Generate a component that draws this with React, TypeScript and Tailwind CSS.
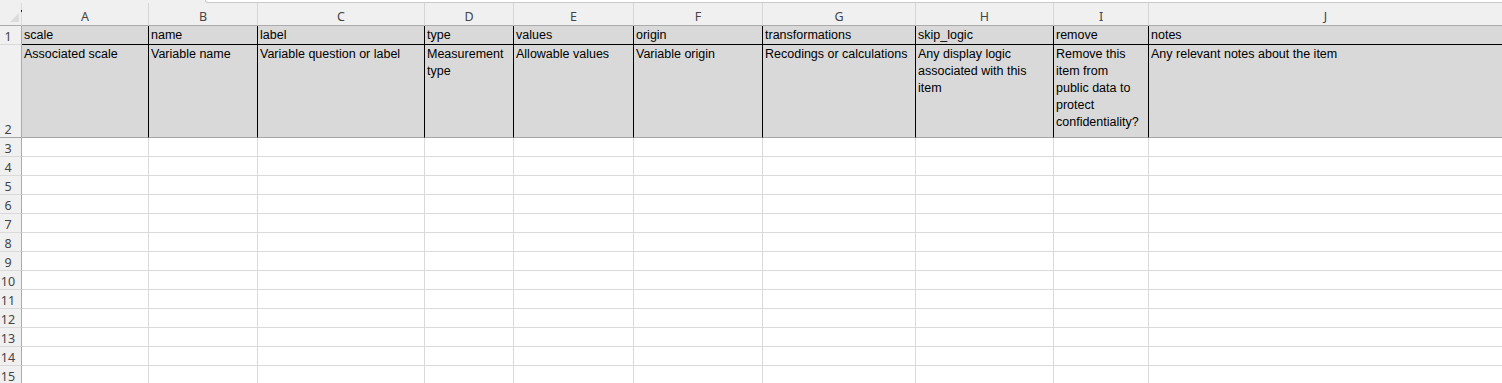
import React from 'react';

interface Col {
  letter: string;
  w: string;
  head: string;
  desc: string[];
}

const cols: Col[] = [
  { letter: 'A', w: 'w-[127px]', head: 'scale', desc: ['Associated scale'] },
  { letter: 'B', w: 'w-[109px]', head: 'name', desc: ['Variable name'] },
  { letter: 'C', w: 'w-[167px]', head: 'label', desc: ['Variable question or label'] },
  { letter: 'D', w: 'w-[89px]', head: 'type', desc: ['Measurement', 'type'] },
  { letter: 'E', w: 'w-[120px]', head: 'values', desc: ['Allowable values'] },
  { letter: 'F', w: 'w-[129px]', head: 'origin', desc: ['Variable origin'] },
  { letter: 'G', w: 'w-[153px]', head: 'transformations', desc: ['Recodings or calculations'] },
  { letter: 'H', w: 'w-[138px]', head: 'skip_logic', desc: ['Any display logic', 'associated with this', 'item'] },
  { letter: 'I', w: 'w-[95px]', head: 'remove', desc: ['Remove this', 'item from', 'public data to', 'protect', 'confidentiality?'] },
  { letter: 'J', w: 'w-[354px]', head: 'notes', desc: ['Any relevant notes about the item'] },
];

const emptyRows = [3, 4, 5, 6, 7, 8, 9, 10, 11, 12, 13, 14, 15];

const headFont = "font-['Noto_Sans','Liberation_Sans',sans-serif] text-[12.5px] text-[#444]";
const rowHeadCls = `flex w-[22px] shrink-0 items-end justify-center border-r border-b border-r-[#ababab] bg-[#f0f0f0] pr-[5px] leading-[15px] ${headFont}`;

export default function App() {
  return (
    <div className="h-[383px] w-[1502px] overflow-hidden bg-white font-['Liberation_Sans',Arial,sans-serif] text-[12.5px] text-black">
      {/* formula bar edge */}
      <div className="flex h-[3px] bg-[#f0f0f0]">
        <div className="w-[205px]" />
        <div className="flex-1 rounded-bl-[3px] border-b border-l border-[#c8c8c8] bg-white" />
      </div>

      {/* column letters */}
      <div className="flex h-[23px]">
        <div className="relative w-[22px] shrink-0 border-r border-b border-r-[#dadada] border-b-[#ababab] bg-[#f0f0f0]">
          <svg className="absolute left-[10px] top-[10px]" width="10" height="10" viewBox="0 0 10 10">
            <polygon points="0,9 9,9 9,0" fill="#dcdcdc" />
          </svg>
          <div className="absolute left-[21px] top-[7px] h-[2px] w-[1px] bg-[#222]" />
        </div>
        {cols.map((c) => (
          <div key={c.letter} className={`${c.w} flex shrink-0 items-end justify-center border-r border-b border-r-[#d6d6d6] border-b-[#ababab] bg-[#f0f0f0] pb-[1px] leading-[15px] ${headFont}`}>
            {c.letter}
          </div>
        ))}
      </div>

      {/* row 1 */}
      <div className="flex h-[19px]">
        <div className={`${rowHeadCls} border-b-[#dadada]`}>1</div>
        {cols.map((c) => (
          <div key={c.letter} className={`${c.w} flex shrink-0 items-center overflow-hidden whitespace-nowrap border-r border-b border-black bg-[#d9d9d9] pl-[2px] leading-[17px]`}>
            {c.head}
          </div>
        ))}
      </div>

      {/* row 2 */}
      <div className="flex h-[93px]">
        <div className={`${rowHeadCls} border-b-[#a6a6a6]`}>2</div>
        {cols.map((c) => (
          <div key={c.letter} className={`${c.w} shrink-0 overflow-hidden border-r border-b border-r-black border-b-[#a6a6a6] bg-[#d9d9d9] pl-[2px] pt-[1px] leading-[17px]`}>
            {c.desc.map((line) => (
              <div key={line} className="whitespace-nowrap">{line}</div>
            ))}
          </div>
        ))}
      </div>

      {/* empty rows */}
      {emptyRows.map((n) => (
        <div key={n} className="flex h-[19px]">
          <div className={`${rowHeadCls} border-b-[#dadada]`}>{n}</div>
          {cols.map((c) => (
            <div key={c.letter} className={`${c.w} shrink-0 border-r border-b border-[#dadada]`} />
          ))}
        </div>
      ))}
    </div>
  );
}
